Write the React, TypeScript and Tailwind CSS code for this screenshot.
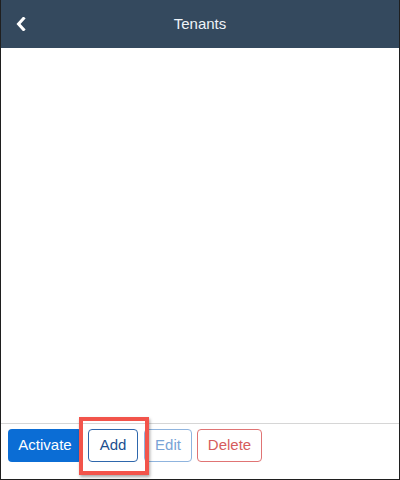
import React from "react";

export default function App() {
  return (
    <div
      className="w-[400px] h-[480px] flex flex-col bg-white border-x border-b border-[#1f1f1f] overflow-hidden"
      style={{ fontFamily: '"Liberation Sans", Arial, sans-serif' }}
    >
      <div className="h-[48px] shrink-0 bg-[#34495e] flex items-center relative">
        <svg className="absolute left-[15px] top-[17px]" width="10" height="14" viewBox="0 0 10 14">
          <path d="M7.5 1.5 L2.5 7 L7.5 12.5" fill="none" stroke="#ffffff" strokeWidth="3" strokeLinecap="square" />
        </svg>
        <div className="flex-1 text-center text-[15px] text-[#eef3f8]">Tenants</div>
      </div>
      <div className="flex-1" />
      <div className="h-[56px] shrink-0 border-t border-[#d6d6d6] flex items-start pl-[7px] pt-[5px]">
        <button className="h-[33px] w-[74px] rounded-[4px] bg-[#0b6dd5] text-white text-[15px]">Activate</button>
        <div className="relative ml-[6px]">
          <button className="h-[33px] w-[50px] rounded-[4px] border border-[#2e67ac] text-[#1c4f8f] text-[15px]">Add</button>
          <div className="absolute left-[-9px] top-[-12px] w-[70px] h-[58px] border-[4px] border-[#f2544b] shadow-[1px_2px_3px_rgba(0,0,0,0.35)] pointer-events-none" />
        </div>
        <button className="ml-[6px] h-[33px] w-[48px] rounded-[4px] border border-[#8fb4de] text-[#79a3d6] text-[15px]">Edit</button>
        <button className="ml-[5px] h-[33px] w-[65px] rounded-[4px] border border-[#e07474] text-[#d65c5c] text-[15px]">Delete</button>
      </div>
    </div>
  );
}
